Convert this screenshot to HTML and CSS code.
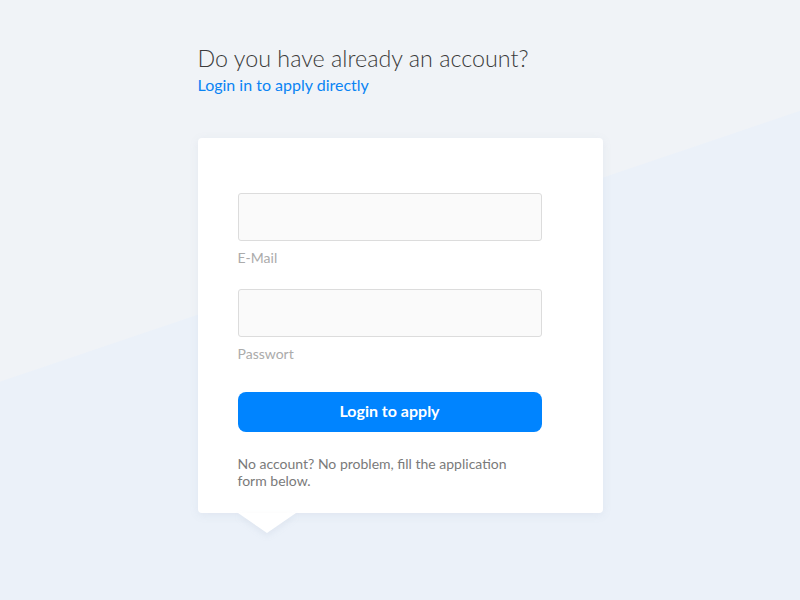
FILE: index.html
```html
<!DOCTYPE html>
<html lang="en">
<head>
  <meta charset="UTF-8" />
  <meta name="viewport" content="width=device-width, initial-scale=1.0"/>
  <title>Login to apply</title>
  <link rel="stylesheet" href="styles.css">
</head>
<body>
  <div class="wrap">
    <div class="intro">
      <h1>Do you have already an account?</h1>
      <a href="#" class="intro-link">Login in to apply directly</a>
    </div>

    <div class="login-box">
      <form id="loginForm">
        <div class="field">
          <input type="email" id="email" />
          <label for="email">E-Mail</label>
        </div>

        <div class="field">
          <input type="password" id="password" />
          <label for="password">Passwort</label>
        </div>

        <button type="submit">Login to apply</button>

        <p class="note">No account? No problem, fill the application form below.</p>
      </form>
    </div>
  </div>
</body>
</html>
```

FILE: styles.css
```css
html, body {
  height: 100%;
}

body {
  margin: 0;
  font-family: 'Lato', 'Open Sans', sans-serif;
  background: linear-gradient(161.3deg, #f0f3f7 361px, #ebf1f9 362px);
}

.wrap {
  width: 405px;
  margin: 0 auto;
  padding-top: 41px;
}

.intro h1 {
  margin: 0;
  font-size: 23.3px;
  font-weight: 300;
  line-height: 34px;
  color: #3b3b3b;
}

.intro-link {
  display: block;
  font-size: 16px;
  line-height: 20px;
  color: #0a84f4;
  text-decoration: none;
}

.login-box {
  position: relative;
  margin-top: 43px;
  background: #ffffff;
  border-radius: 4px;
  padding: 55px 61px 24px 40px;
  box-shadow: 0 2px 10px rgba(120, 140, 170, 0.10);
}

.login-box::after {
  content: '';
  position: absolute;
  left: 40px;
  bottom: -20px;
  width: 0;
  height: 0;
  border-left: 29px solid transparent;
  border-right: 29px solid transparent;
  border-top: 20px solid #ffffff;
  filter: drop-shadow(0 3px 3px rgba(120, 140, 170, 0.10));
}

.field {
  margin-bottom: 23px;
}

.field input {
  display: block;
  width: 100%;
  height: 48px;
  box-sizing: border-box;
  border: 1px solid #dcdcdc;
  border-radius: 3px;
  background: #fafafa;
  padding: 0 12px;
  font-family: inherit;
  font-size: 14px;
}

.field label {
  display: block;
  margin-top: 8px;
  font-size: 14px;
  line-height: 17px;
  color: #ababab;
}

.field + .field {
  margin-bottom: 30px;
}

button {
  display: block;
  width: 100%;
  height: 40px;
  padding: 0 0 3px;
  border: none;
  border-radius: 8px;
  background-color: #0084ff;
  color: #ffffff;
  font-family: inherit;
  font-size: 16px;
  font-weight: 700;
  cursor: pointer;
}

.note {
  margin: 23px 0 0;
  max-width: 285px;
  font-size: 14px;
  line-height: 17px;
  color: #7a7a7a;
}
```
